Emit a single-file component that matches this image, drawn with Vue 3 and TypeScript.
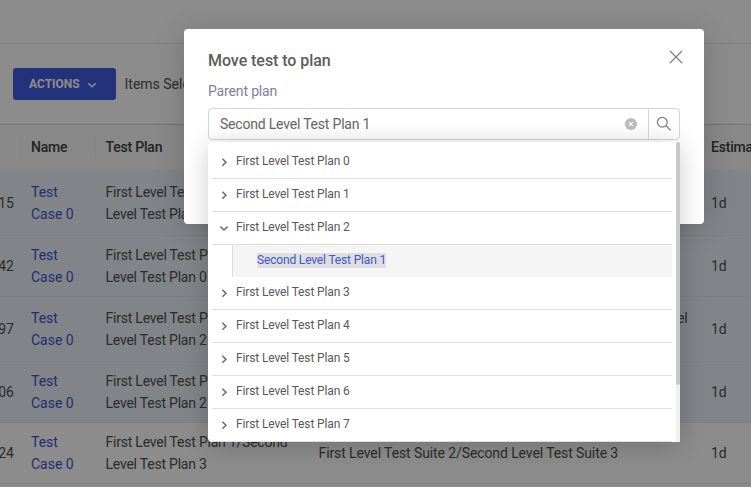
<script setup lang="ts">
import { ref } from 'vue'

interface TestRow {
  id: string
  plan: string[]
  suite: string[]
  estimate: string
  selected: boolean
  tall: boolean
}

interface PlanNode {
  label: string
  children: string[]
}

const rows: TestRow[] = [
  { id: '15', plan: ['First Level Test Plan 2/Second', 'Level Test Plan 1'], suite: [], estimate: '1d', selected: true, tall: true },
  { id: '42', plan: ['First Level Test Plan 1/Second', 'Level Test Plan 0'], suite: [], estimate: '1d', selected: true, tall: false },
  { id: '97', plan: ['First Level Test Plan 1/Second', 'Level Test Plan 2'], suite: ['First Level Test Suite 2/Second Level Test Suite 3/Third Level', 'Test Suite 1'], estimate: '1d', selected: true, tall: true },
  { id: '06', plan: ['First Level Test Plan 1/Second', 'Level Test Plan 2'], suite: [], estimate: '1d', selected: true, tall: false },
  { id: '24', plan: ['First Level Test Plan 1/Second', 'Level Test Plan 3'], suite: ['First Level Test Suite 2/Second Level Test Suite 3'], estimate: '1d', selected: false, tall: false },
]

const nodes: PlanNode[] = Array.from({ length: 8 }, (_, i) => ({
  label: `First Level Test Plan ${i}`,
  children: i === 2 ? ['Second Level Test Plan 1'] : [],
}))

const expanded = ref<string[]>(['First Level Test Plan 2'])
const chosen = ref('Second Level Test Plan 1')

function toggle(label: string) {
  expanded.value = expanded.value.includes(label)
    ? expanded.value.filter((l) => l !== label)
    : [...expanded.value, label]
}
</script>

<template>
  <div class="screen">
    <div class="page">
      <div class="topbar"></div>
      <div class="toolbar">
        <button class="actions">
          <span>ACTIONS</span>
          <svg width="10" height="10" viewBox="0 0 10 10"><path d="M1.4 3.4 5 6.8 8.6 3.4" /></svg>
        </button>
        <span class="selected-count">Items Selected</span>
      </div>
      <div class="line head">
        <div class="id"></div>
        <div class="name">Name</div>
        <div class="plan">Test Plan</div>
        <div class="suite"></div>
        <div class="estimate">Estimated</div>
      </div>
      <div v-for="row in rows" :key="row.id" class="line row" :class="{ selected: row.selected, tall: row.tall }">
        <div class="id">{{ row.id }}</div>
        <div class="name link"><div>Test</div><div>Case 0</div></div>
        <div class="plan"><div v-for="part in row.plan" :key="part">{{ part }}</div></div>
        <div class="suite"><div v-for="part in row.suite" :key="part">{{ part }}</div></div>
        <div class="estimate">{{ row.estimate }}</div>
      </div>
    </div>

    <div class="mask"></div>

    <div class="modal">
      <div class="modal-head">
        <h2>Move test to plan</h2>
        <svg class="close" width="14" height="14" viewBox="0 0 14 14"><path d="M1 1 13 13M13 1 1 13" /></svg>
      </div>
      <label>Parent plan</label>
      <div class="field">
        <span class="value">{{ chosen }}</span>
        <svg class="clear" width="12" height="12" viewBox="0 0 12 12">
          <circle cx="6" cy="6" r="6" />
          <path d="M4.2 4.2 7.8 7.8M7.8 4.2 4.2 7.8" />
        </svg>
        <span class="search">
          <svg width="16" height="16" viewBox="0 0 16 16"><circle cx="6.3" cy="6.2" r="4.9" /><path d="M9.9 9.8 14.7 14.4" /></svg>
        </span>
        <div class="dropdown">
          <div class="tree">
            <template v-for="node in nodes" :key="node.label">
              <div class="node" @click="toggle(node.label)">
                <svg width="10" height="10" viewBox="0 0 10 10">
                  <path v-if="expanded.includes(node.label)" d="M1.4 3.6 5 7 8.6 3.6" />
                  <path v-else d="M3.4 1.7 6.9 5.2 3.4 8.7" />
                </svg>
                <span>{{ node.label }}</span>
              </div>
              <template v-if="expanded.includes(node.label)">
                <div v-for="child in node.children" :key="child" class="child"><span>{{ child }}</span></div>
              </template>
            </template>
          </div>
          <div class="scrollbar"><div class="thumb"></div></div>
        </div>
      </div>
    </div>
  </div>
</template>

<style>
body {
  margin: 0;
  overflow: hidden;
}
</style>

<style scoped>
.screen {
  position: relative;
  width: 751px;
  height: 487px;
  overflow: hidden;
  background: #fff;
  color: #505050;
  font-family: Roboto, 'Liberation Sans', sans-serif;
  font-size: 14px;
  line-height: 22px;
}
.screen * {
  box-sizing: border-box;
}
.topbar {
  height: 44px;
  border-bottom: 1px solid #e8e8e8;
}
.toolbar {
  display: flex;
  align-items: center;
  gap: 8.5px;
  height: 81px;
  padding-left: 13px;
  border-bottom: 1px solid #d0d0d0;
}
.actions {
  display: flex;
  align-items: center;
  gap: 7px;
  width: 103px;
  height: 32px;
  padding: 0 0 1px 16px;
  border: 0;
  border-radius: 3px;
  background: #435be0;
  color: #fff;
  font: 700 12px/30px Roboto, sans-serif;
}
.actions svg {
  margin-top: 3px;
}
.actions path {
  fill: none;
  stroke: #fff;
  stroke-width: 1.5;
}
.selected-count {
  white-space: nowrap;
}
.line {
  display: grid;
  grid-template-columns: 22px 74px 213px 393px 49px;
  align-items: center;
  white-space: nowrap;
}
.line > div {
  padding-left: 9px;
}
.line > .plan,
.line > .suite {
  padding-left: 9.5px;
}
.line > .id {
  padding: 0 8px 0 0;
  direction: rtl;
}
.head {
  height: 46px;
  border-bottom: 1px solid #f0f0f0;
  background: #f7f7f7;
  color: #424242;
  font-weight: 500;
  letter-spacing: -0.2px;
}
.head > div {
  height: 21px;
  line-height: 21px;
  border-right: 1px solid #ededed;
}
.head > .plan,
.head > .suite,
.head > .estimate {
  border-right: 0;
}
.row {
  height: 61px;
  border-bottom: 1px solid #e6e8ea;
}
.row.tall {
  height: 65px;
}
.row.selected {
  background: #ecf2fa;
}
.row .plan {
  letter-spacing: -0.22px;
}
.row .suite {
  letter-spacing: -0.12px;
}
.row:not(.tall) .suite {
  letter-spacing: -0.1px;
}
.row.tall .suite {
  letter-spacing: -0.15px;
}
.row .name,
.row .plan {
  padding-bottom: 1px;
}
.link {
  color: #3f53cc;
}
.mask {
  position: absolute;
  inset: 0;
  background: rgba(0, 0, 0, 0.45);
}
.modal {
  position: absolute;
  left: 184px;
  top: 29px;
  width: 520px;
  height: 195px;
  padding: 21px 24px 0;
  border-radius: 4px;
  background: #fff;
  box-shadow: 0 4px 30px rgba(0, 0, 0, 0.18);
}
.modal-head {
  display: flex;
  justify-content: space-between;
  height: 30px;
}
h2 {
  margin: 0;
  color: #5c5c5c;
  font-size: 16px;
  line-height: 22px;
  font-weight: 500;
  letter-spacing: -0.05px;
}
.close {
  margin-right: -3px;
  fill: none;
  stroke: #808080;
  stroke-width: 1.3;
}
.modal label {
  display: block;
  height: 28px;
  color: #80809a;
  letter-spacing: -0.15px;
}
.field {
  position: relative;
  display: flex;
  align-items: center;
  height: 32px;
  border: 1px solid #d5d5d5;
  border-radius: 4px;
}
.value {
  flex: 1;
  padding-left: 11px;
  color: #666;
  letter-spacing: -0.2px;
}
.clear {
  margin-right: 11px;
}
.clear circle {
  fill: #bdbdbd;
}
.clear path {
  stroke: #fff;
  stroke-width: 1.2;
}
.search {
  display: flex;
  align-items: center;
  justify-content: center;
  width: 31px;
  height: 30px;
  border-left: 1px solid #d5d5d5;
}
.search svg {
  fill: none;
  stroke: #7c7c7c;
  stroke-width: 1.2;
}
.dropdown {
  position: absolute;
  left: -1px;
  top: 33px;
  display: flex;
  justify-content: space-between;
  width: 472px;
  height: 300px;
  overflow: hidden;
  border-radius: 4px 0 0 4px;
  background: #fff;
}
.field::after {
  content: '';
  position: absolute;
  left: -1px;
  top: 33px;
  width: 472px;
  height: 300px;
  border-radius: 4px 0 0 4px;
  box-shadow: 0 3px 26px rgba(0, 0, 0, 0.2);
  pointer-events: none;
}
.tree {
  width: 464px;
  padding: 4px 0 0 4px;
  color: #595959;
  font-size: 12px;
  letter-spacing: -0.13px;
}
.node {
  display: flex;
  align-items: center;
  gap: 7px;
  height: 33px;
  padding: 0 0 2px 7px;
  border-bottom: 1px solid #dedede;
}
.node svg {
  margin-top: 2px;
  fill: none;
  stroke: #707070;
  stroke-width: 1.6;
}
.child {
  display: flex;
  align-items: center;
  height: 32px;
  margin-left: 20px;
  padding: 0 0 1px 24px;
  border-left: 1px solid #dcdcdc;
  background: #f5f5f5;
  color: #4156d0;
  letter-spacing: -0.16px;
}
.child span {
  height: 15px;
  line-height: 15px;
  background: #dedede;
}
.scrollbar {
  width: 4px;
  background: #f1f1f1;
}
.thumb {
  height: 243px;
  border-radius: 2px;
  background: #c8c8c8;
}
</style>
